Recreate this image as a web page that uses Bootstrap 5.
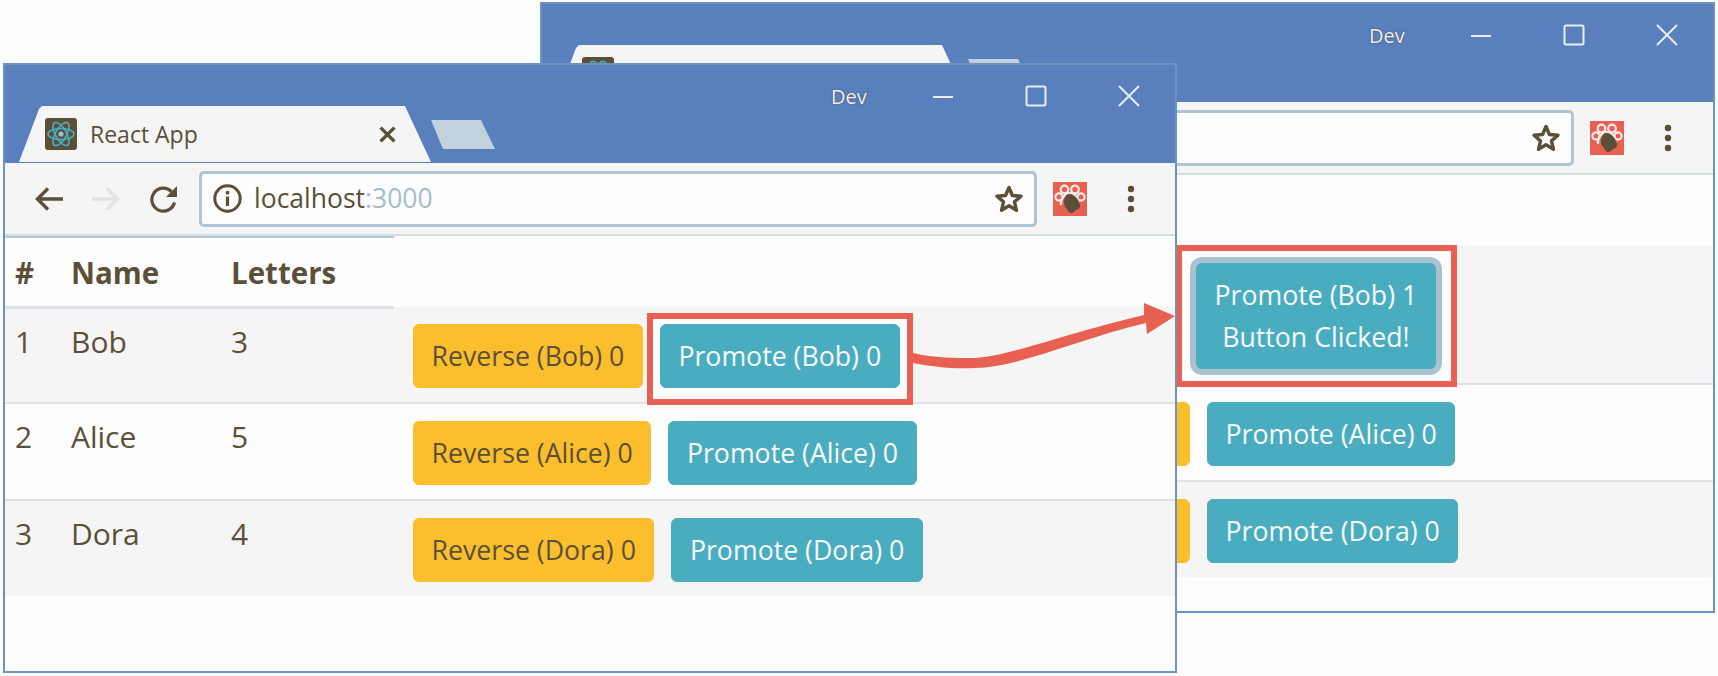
<!DOCTYPE html>
<html lang="en">
  <head>
    <meta charset="UTF-8" />
    <meta name="viewport" content="width=device-width, initial-scale=1" />
    <title>React App</title>
    <link
      href="https://cdn.jsdelivr.net/npm/bootstrap@5.3.0/dist/css/bootstrap.min.css"
      rel="stylesheet"
    />
    <style>
      body {
        background: #fdfdfd;
        color: #5c4f38;
        font-family: "Open Sans", "Noto Sans", sans-serif;
        overflow: hidden;
      }
      .desk {
        position: relative;
        width: 1718px;
        height: 676px;
      }
      .win {
        position: absolute;
        background: #fdfdfd;
        border: 2px solid #6b93bd;
        display: flex;
        flex-direction: column;
      }
      .win-back {
        left: 540px;
        top: 2px;
        width: 1175px;
        height: 611px;
        z-index: 1;
      }
      .win-front {
        left: 3px;
        top: 63px;
        width: 1174px;
        height: 610px;
        z-index: 2;
      }
      .titlebar {
        background: #597fbc;
        height: 98px;
        flex: none;
      }
      .caption {
        height: 41px;
        padding-top: 20px;
        padding-right: 35px;
        color: #eef2f5;
      }
      .caption-text {
        font-size: 20px;
        line-height: 24px;
        width: 39px;
        margin-right: 62px;
        white-space: nowrap;
        text-shadow: 0 0 1.5px #3d3a36;
      }
      .caption svg {
        width: 22px;
        height: 22px;
        margin-left: 71px;
      }
      .caption svg:first-of-type {
        margin-left: 0;
      }
      .tab {
        width: 412px;
        height: 56px;
        margin-left: 14px;
        padding-left: 26px;
        padding-right: 35px;
        background: #f5f5f5;
        clip-path: polygon(0 100%, 20px 3px, 23px 0, 386px 0, 100% 100%);
      }
      .tab-title {
        font-size: 23px;
        margin-left: 13px;
        white-space: nowrap;
      }
      .new-tab {
        width: 64px;
        height: 29px;
        margin-top: 14px;
        background: #c2d1dc;
        clip-path: polygon(0 0, 50px 0, 100% 100%, 12px 100%);
      }
      .toolbar {
        height: 73px;
        flex: none;
        background: #f5f5f5;
        border-bottom: 2px solid #d3dde2;
        padding-left: 29px;
      }
      .nav-fwd {
        margin-left: 29px;
        color: #dfe3e5;
        transform: scaleX(-1);
      }
      .nav-reload {
        margin-left: 28px;
        color: #5c4f38;
      }
      .nav-back {
        color: #5c4f38;
      }
      .url-box {
        width: 838px;
        height: 56px;
        margin-left: 21px;
        padding: 0 10px 0 11px;
        background: #fdfdfd;
        border: 3px solid #afc6d2;
        border-radius: 5px;
        font-size: 26.5px;
      }
      .url-text {
        margin-left: 12px;
      }
      .url-port {
        color: #a3bdcb;
      }
      .ext-icon {
        margin-left: 16px;
      }
      .more-icon {
        margin-left: 40px;
      }
      .roster {
        --bs-table-bg: transparent;
        --bs-table-color: #5c4f38;
        --bs-table-striped-color: #5c4f38;
        --bs-table-striped-bg: #f5f5f5;
        --bs-table-border-color: #dee2e6;
        table-layout: fixed;
        font-size: 30px;
        line-height: 42px;
        margin: 0;
      }
      .col-num {
        width: 56px;
      }
      .col-name {
        width: 160px;
      }
      .col-letters {
        width: 173px;
      }
      .roster th {
        height: 70px;
        padding: 11px 10px 12px;
        font-size: 29.5px;
        font-weight: 700;
        border-top: 2px solid #b4cad6;
        border-bottom: 3px solid #dee2e6;
      }
      .roster td {
        padding: 12px 10px 15px;
        border-bottom-width: 2px;
      }
      .roster td.act-cell {
        padding: 17px 0 14px 19px;
      }
      .roster tr:last-child td {
        border-bottom-width: 0;
        padding-bottom: 14px;
      }
      .btn-row {
        column-gap: 17px;
      }
      .btn-row .btn {
        font-size: 26.7px;
        line-height: 42px;
        padding: 10px 17.5px;
        border-radius: 6px;
        flex: none;
      }
      .btn-row .stub-bob {
        width: 229px;
        height: 64px;
      }
      .btn-row .stub-wide {
        width: 240px;
        height: 64px;
      }
      .btn-warning {
        --bs-btn-bg: #fbbe2c;
        --bs-btn-border-color: #fbbe2c;
        --bs-btn-color: #5c4f38;
      }
      .btn-info {
        --bs-btn-bg: #4aadbf;
        --bs-btn-border-color: #4aadbf;
        --bs-btn-color: #f7fafb;
      }
      .marked {
        position: relative;
        z-index: 1;
      }
      .marked .btn {
        position: relative;
        z-index: 2;
      }
      .callout {
        position: absolute;
        border: 6px solid #e86052;
        background: #fdfdfd;
        z-index: 1;
      }
      .callout-plain {
        inset: -11px -13px -17px -13px;
      }
      .callout-focus {
        inset: -18px -21px -18px -20px;
      }
      .btn.ring-on {
        box-shadow: 0 0 0 6px #a9c3d0;
      }
      .annot {
        position: absolute;
        left: 0;
        top: 0;
        z-index: 3;
        pointer-events: none;
      }
    </style>
  </head>
  <body>
    <svg width="0" height="0" class="d-block">
      <symbol id="ic-min" viewBox="0 0 22 22"><path d="M1 12h20" stroke="#e8eef2" stroke-width="2" /></symbol>
      <symbol id="ic-max" viewBox="0 0 22 22"><rect x="1.5" y="1.5" width="19" height="19" rx="1.5" fill="none" stroke="#e8eef2" stroke-width="2" /></symbol>
      <symbol id="ic-close" viewBox="0 0 22 22"><path d="M1 1l20 20M21 1L1 21" stroke="#e8eef2" stroke-width="2" /></symbol>
      <symbol id="ic-react" viewBox="0 0 32 32">
        <rect width="32" height="32" rx="3" fill="#5c4f38" />
        <g fill="none" stroke="#4aadbf" stroke-width="1.6">
          <ellipse cx="16" cy="16" rx="13" ry="5.5" />
          <ellipse cx="16" cy="16" rx="13" ry="5.5" transform="rotate(60 16 16)" />
          <ellipse cx="16" cy="16" rx="13" ry="5.5" transform="rotate(120 16 16)" />
        </g>
        <circle cx="16" cy="16" r="2.6" fill="#8fc6d4" />
      </symbol>
      <symbol id="ic-x" viewBox="0 0 16 16"><path d="M1.500 1.500l13 13M14.500 1.500l-13 13" stroke="#5c4f38" stroke-width="3.200" /></symbol>
      <symbol id="ic-arrow" viewBox="0 0 29 26"><path d="M29 13H3.500M14 2.500L3.500 13 14 23.500" fill="none" stroke="currentColor" stroke-width="3.400" /></symbol>
      <symbol id="ic-reload" viewBox="0 0 29 30">
        <path d="M25.500 18.500A11.500 11.500 0 1 1 22.500 7.500" fill="none" stroke="#5c4f38" stroke-width="3.200" />
        <path d="M28 2v11H17z" fill="#5c4f38" />
      </symbol>
      <symbol id="ic-info" viewBox="0 0 29 29">
        <circle cx="14.500" cy="14.500" r="12.700" fill="none" stroke="#5c4f38" stroke-width="3" />
        <circle cx="14.500" cy="8.700" r="1.900" fill="#5c4f38" />
        <path d="M14.500 12.500v9.500" stroke="#5c4f38" stroke-width="3.200" />
      </symbol>
      <symbol id="ic-star" viewBox="0 0 30 30">
        <path d="M15 3.500l3.400 8 8.600.7-6.500 5.700 2 8.400-7.500-4.500-7.500 4.500 2-8.400L3 12.200l8.600-.7z" fill="#fdfdfd" stroke="#5c4f38" stroke-width="3.400" stroke-linejoin="round" />
      </symbol>
      <symbol id="ic-paw" viewBox="0 0 34 34">
        <rect width="34" height="34" fill="#e86052" />
        <g fill="none" stroke="#f1ece8" stroke-width="2.200">
          <circle cx="11.500" cy="7.500" r="3.800" />
          <circle cx="22" cy="7.500" r="3.800" />
          <circle cx="6" cy="15" r="3.600" />
          <circle cx="28" cy="15" r="3.600" />
          <path d="M8 23c-1-6 4-12 9-12s9 5 8 11" />
        </g>
        <path d="M16 12c6 0 11 7 11 12 0 4-4 3-6 6-2 2-5 1-6-1-1-3-4-4-4-8s2-9 5-9z" fill="#5c4f38" />
      </symbol>
      <symbol id="ic-more" viewBox="0 0 8 28"><circle cx="4" cy="4" r="3.200" fill="#5c4f38" /><circle cx="4" cy="14" r="3.200" fill="#5c4f38" /><circle cx="4" cy="24" r="3.200" fill="#5c4f38" /></symbol>
    </svg>

    <div class="desk">
      <!-- window after the click, the front window hides its left part -->
      <section class="win win-back">
        <div class="titlebar">
          <div class="caption d-flex justify-content-end">
            <span class="caption-text">Dev</span>
            <svg><use href="#ic-min" /></svg>
            <svg><use href="#ic-max" /></svg>
            <svg><use href="#ic-close" /></svg>
          </div>
          <div class="d-flex">
            <div class="tab d-flex align-items-center">
              <svg width="32" height="32" class="flex-shrink-0"><use href="#ic-react" /></svg>
              <svg width="17" height="17" class="ms-auto"><use href="#ic-x" /></svg>
            </div>
            <div class="new-tab"></div>
          </div>
        </div>
        <div class="toolbar d-flex align-items-center">
          <svg width="29" height="26" class="nav-back"><use href="#ic-arrow" /></svg>
          <svg width="29" height="26" class="nav-fwd"><use href="#ic-arrow" /></svg>
          <svg width="29" height="30" class="nav-reload"><use href="#ic-reload" /></svg>
          <div class="url-box d-flex align-items-center">
            <svg width="30" height="30" class="ms-auto"><use href="#ic-star" /></svg>
          </div>
          <svg width="34" height="34" class="ext-icon"><use href="#ic-paw" /></svg>
          <svg width="8" height="28" class="more-icon"><use href="#ic-more" /></svg>
        </div>
        <table class="table table-striped roster">
          <colgroup><col class="col-num" /><col class="col-name" /><col class="col-letters" /><col /></colgroup>
          <thead>
            <tr><th></th><th></th><th></th></tr>
          </thead>
          <tbody>
            <tr>
              <td></td><td></td><td></td>
              <td class="act-cell">
                <div class="d-flex btn-row align-items-start">
                  <button class="btn btn-warning stub-bob" aria-label="Reverse (Bob) 0"></button>
                  <span class="marked d-inline-block">
                    <span class="callout callout-focus"></span>
                    <button class="btn btn-info ring-on d-block">Promote (Bob) 1<br />Button Clicked!</button>
                  </span>
                </div>
              </td>
            </tr>
            <tr>
              <td></td><td></td><td></td>
              <td class="act-cell">
                <div class="d-flex btn-row">
                  <button class="btn btn-warning stub-wide" aria-label="Reverse (Alice) 0"></button>
                  <button class="btn btn-info">Promote (Alice) 0</button>
                </div>
              </td>
            </tr>
            <tr>
              <td></td><td></td><td></td>
              <td class="act-cell">
                <div class="d-flex btn-row">
                  <button class="btn btn-warning stub-wide" aria-label="Reverse (Dora) 0"></button>
                  <button class="btn btn-info">Promote (Dora) 0</button>
                </div>
              </td>
            </tr>
          </tbody>
        </table>
      </section>

      <!-- window before the click -->
      <section class="win win-front">
        <div class="titlebar">
          <div class="caption d-flex justify-content-end">
            <span class="caption-text">Dev</span>
            <svg><use href="#ic-min" /></svg>
            <svg><use href="#ic-max" /></svg>
            <svg><use href="#ic-close" /></svg>
          </div>
          <div class="d-flex">
            <div class="tab d-flex align-items-center">
              <svg width="32" height="32" class="flex-shrink-0"><use href="#ic-react" /></svg>
              <span class="tab-title">React App</span>
              <svg width="17" height="17" class="ms-auto"><use href="#ic-x" /></svg>
            </div>
            <div class="new-tab"></div>
          </div>
        </div>
        <div class="toolbar d-flex align-items-center">
          <svg width="29" height="26" class="nav-back"><use href="#ic-arrow" /></svg>
          <svg width="29" height="26" class="nav-fwd"><use href="#ic-arrow" /></svg>
          <svg width="29" height="30" class="nav-reload"><use href="#ic-reload" /></svg>
          <div class="url-box d-flex align-items-center">
            <svg width="29" height="29" class="flex-shrink-0"><use href="#ic-info" /></svg>
            <span class="url-text">localhost<span class="url-port">:3000</span></span>
            <svg width="30" height="30" class="ms-auto"><use href="#ic-star" /></svg>
          </div>
          <svg width="34" height="34" class="ext-icon"><use href="#ic-paw" /></svg>
          <svg width="8" height="28" class="more-icon"><use href="#ic-more" /></svg>
        </div>
        <table class="table table-striped roster">
          <colgroup><col class="col-num" /><col class="col-name" /><col class="col-letters" /><col /></colgroup>
          <thead>
            <tr><th>#</th><th>Name</th><th>Letters</th></tr>
          </thead>
          <tbody>
            <tr>
              <td>1</td><td>Bob</td><td>3</td>
              <td class="act-cell">
                <div class="d-flex btn-row">
                  <button class="btn btn-warning">Reverse (Bob) 0</button>
                  <span class="marked d-inline-block">
                    <span class="callout callout-plain"></span>
                    <button class="btn btn-info d-block">Promote (Bob) 0</button>
                  </span>
                </div>
              </td>
            </tr>
            <tr>
              <td>2</td><td>Alice</td><td>5</td>
              <td class="act-cell">
                <div class="d-flex btn-row">
                  <button class="btn btn-warning">Reverse (Alice) 0</button>
                  <button class="btn btn-info">Promote (Alice) 0</button>
                </div>
              </td>
            </tr>
            <tr>
              <td>3</td><td>Dora</td><td>4</td>
              <td class="act-cell">
                <div class="d-flex btn-row">
                  <button class="btn btn-warning">Reverse (Dora) 0</button>
                  <button class="btn btn-info">Promote (Dora) 0</button>
                </div>
              </td>
            </tr>
          </tbody>
        </table>
      </section>

      <svg class="annot" width="1718" height="676" viewBox="0 0 1718 676">
        <path
          d="M913 353C935 358 955 358 975 358C1010 356 1060 335 1144 315L1144 303L1175 316L1147 334L1146 323C1075 340 1020 367 975 368C950 369 935 367 913 363Z"
          fill="#e86052"
        />
      </svg>
    </div>

    <script src="https://cdn.jsdelivr.net/npm/bootstrap@5.3.0/dist/js/bootstrap.bundle.min.js"></script>
  </body>
</html>
